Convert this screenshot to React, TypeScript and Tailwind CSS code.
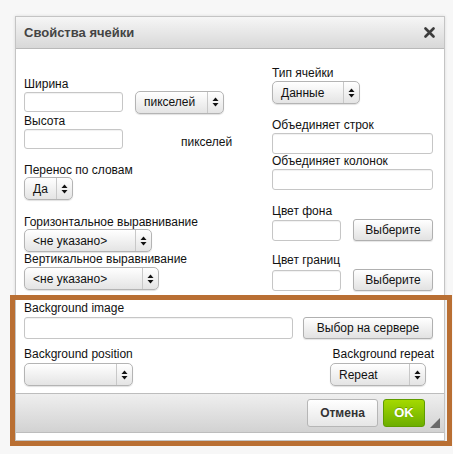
import React from 'react';

const font = { fontFamily: '"Liberation Sans", Arial, sans-serif' };

const Arrows = () => (
    <svg width="7" height="10" viewBox="0 0 7 10">
        <path d="M3.5 0.5 L6.5 4 L0.5 4 Z" fill="#111" />
        <path d="M3.5 9.5 L6.5 6 L0.5 6 Z" fill="#111" />
    </svg>
);

const Select = ({ value, w }: { value?: string; w: string }) => (
    <div className={`${w} h-[23px] flex items-stretch rounded-[5px] border border-[#b4b4b4] bg-gradient-to-b from-[#ffffff] to-[#e4e4e4] shadow-[0_1px_1px_rgba(0,0,0,0.12)]`}>
        <div className="flex-1 flex items-center pl-[8px] text-[12px] text-[#111] whitespace-nowrap overflow-hidden">{value}</div>
        <div className="w-[16px] flex items-center justify-center border-l border-[#c8c8c8]">
            <Arrows />
        </div>
    </div>
);

const Input = ({ w, h = 'h-[21px]' }: { w: string; h?: string }) => (
    <div className={`${w} ${h} rounded-[3px] border border-[#c6c6c6] bg-white shadow-[inset_0_1px_1px_rgba(0,0,0,0.06)]`} />
);

const Button = ({ label, w }: { label: string; w: string }) => (
    <div className={`${w} h-[22px] flex items-center justify-center rounded-[3px] border border-[#b0b0b0] bg-gradient-to-b from-[#ffffff] to-[#e2e2e2] text-[12px] text-[#111] shadow-[0_1px_1px_rgba(0,0,0,0.1)]`}>
        {label}
    </div>
);

const Label = ({ children, className = '' }: { children: React.ReactNode; className?: string }) => (
    <div className={`text-[12px] leading-[13px] text-[#111] whitespace-nowrap ${className}`}>{children}</div>
);

export default function App() {
    return (
        <div className="relative w-[453px] h-[454px] bg-[#f7f7f7] overflow-hidden" style={font}>
            <div className="absolute left-[15px] top-[16px] w-[430px] h-[425px] border border-[#c4c4c4] bg-white shadow-[0_0_3px_rgba(0,0,0,0.12)] flex flex-col">
                {/* title bar */}
                <div className="h-[32px] shrink-0 flex items-center justify-between pl-[8px] pr-[9px] bg-gradient-to-b from-[#f6f6f6] to-[#d8d8d8] border-b border-[#b9b9b9]">
                    <span className="text-[13px] font-bold text-[#444]">Свойства ячейки</span>
                    <svg width="11" height="11" viewBox="0 0 11 11">
                        <path d="M1.5 1.5 L9.5 9.5 M9.5 1.5 L1.5 9.5" stroke="#3c3c3c" strokeWidth="2.6" strokeLinecap="round" />
                    </svg>
                </div>

                {/* body */}
                <div className="flex-1 px-[8px]">
                    <div className="flex">
                        <div className="w-[248px] flex flex-col">
                            <Label className="mt-[29px]">Ширина</Label>
                            <div className="flex items-center mt-[0px] h-[22px]">
                                <Input w="w-[99px]" h="h-[20px]" />
                                <div className="ml-[12px]"><Select value="пикселей" w="w-[89px]" /></div>
                            </div>
                            <Label className="mt-[2px]">Высота</Label>
                            <div className="flex items-end mt-[1px]">
                                <Input w="w-[99px]" h="h-[20px]" />
                                <span className="ml-[58px] mb-[0px] text-[12px] leading-[13px] text-[#111]">пикселей</span>
                            </div>
                            <Label className="mt-[15px]">Перенос по словам</Label>
                            <div className="mt-[0px]"><Select value="Да" w="w-[49px]" /></div>
                            <Label className="mt-[16px]">Горизонтальное выравнивание</Label>
                            <div className="mt-[0px]"><Select value="<не указано>" w="w-[128px]" /></div>
                            <Label className="mt-[1px]">Вертикальное выравнивание</Label>
                            <div className="mt-[1px]"><Select value="<не указано>" w="w-[135px]" /></div>
                        </div>

                        <div className="flex flex-col">
                            <Label className="mt-[18px]">Тип ячейки</Label>
                            <div className="mt-[1px]"><Select value="Данные" w="w-[88px]" /></div>
                            <Label className="mt-[15px]">Объединяет строк</Label>
                            <div className="mt-[1px]"><Input w="w-[161px]" /></div>
                            <Label className="mt-[1px]">Объединяет колонок</Label>
                            <div className="mt-[1px]"><Input w="w-[161px]" /></div>
                            <Label className="mt-[15px]">Цвет фона</Label>
                            <div className="flex items-center mt-[1px] gap-[12px]">
                                <Input w="w-[69px]" />
                                <Button label="Выберите" w="w-[80px]" />
                            </div>
                            <Label className="mt-[13px]">Цвет границ</Label>
                            <div className="flex items-center mt-[2px] gap-[12px]">
                                <Input w="w-[69px]" />
                                <Button label="Выберите" w="w-[80px]" />
                            </div>
                        </div>
                    </div>

                    <Label className="mt-[11px]">Background image</Label>
                    <div className="flex items-center mt-[2px]">
                        <Input w="w-[269px]" h="h-[22px]" />
                        <div className="ml-[10px]"><Button label="Выбор на сервере" w="w-[130px]" /></div>
                    </div>
                    <div className="flex justify-between mt-[9px] pr-[2px]">
                        <div className="flex flex-col">
                            <Label>Background position</Label>
                            <div className="mt-[2px]"><Select w="w-[109px]" /></div>
                        </div>
                        <div className="flex flex-col items-end">
                            <Label>Background repeat</Label>
                            <div className="mt-[2px] mr-[8px]"><Select value="Repeat" w="w-[96px]" /></div>
                        </div>
                    </div>
                </div>

                {/* footer */}
                <div className="relative h-[40px] shrink-0 mb-[7px] flex items-center justify-end gap-[5px] pr-[19px] bg-gradient-to-b from-[#efefef] to-[#d2d2d2] border-t border-b border-[#bdbdbd]">
                    <div className="w-[71px] h-[28px] flex items-center justify-center rounded-[3px] border border-[#b6b6b6] bg-gradient-to-b from-[#ffffff] to-[#e6e6e6] text-[12px] font-bold text-[#333]">
                        Отмена
                    </div>
                    <div className="w-[42px] h-[28px] flex items-center justify-center rounded-[3px] border border-[#5f9c00] bg-gradient-to-b from-[#a4d900] to-[#6cae00] text-[13px] font-bold text-white [text-shadow:0_-1px_0_rgba(0,0,0,0.25)]">
                        OK
                    </div>
                    <svg className="absolute right-[4px] bottom-[4px]" width="10" height="10" viewBox="0 0 10 10">
                        <path d="M10 0 L10 10 L0 10 Z" fill="#6a6a6a" />
                    </svg>
                </div>
            </div>

            {/* annotation frame */}
            <div className="absolute left-[10px] top-[295px] w-[442px] h-[151px] border-[5px] border-[#b96f33]" />
        </div>
    );
}
